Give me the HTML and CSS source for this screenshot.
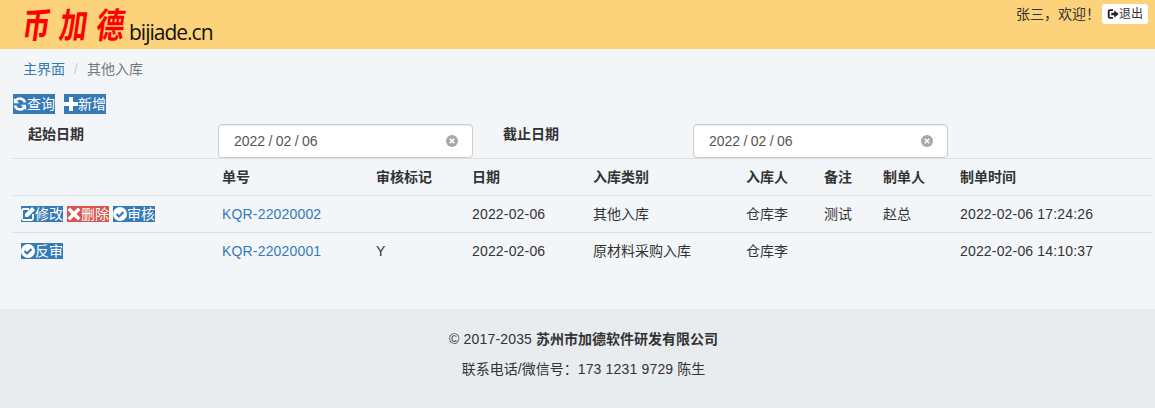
FILE: index.html
```html
<!DOCTYPE html>
<html lang="zh-CN">
<head>
<meta charset="utf-8">
<title>其他入库</title>
<link rel="stylesheet" href="styles.css">
</head>
<body>
<header class="topbar">
  <div class="logo"><span class="logo-cn">币加德</span><span class="logo-en">bijiade.cn</span></div>
  <div class="user">
    <span>张三，欢迎！</span>
    <a class="logout"><svg class="ico-out" viewBox="0 0 14 14"><path d="M7 2.500H3.500A1.500 1.500 0 0 0 2 4v6a1.500 1.500 0 0 0 1.500 1.500H7" fill="none" stroke="#222" stroke-width="2.200"/><path d="M5 5.500h3.500V2.500L13.500 7l-5 4.500V8.500H5z" fill="#222"/></svg>退出</a>
  </div>
</header>
<nav class="crumbs"><a>主界面</a><span class="sep">/</span><span class="cur">其他入库</span></nav>
<div class="tools">
  <a class="btn"><svg class="ico" viewBox="0 0 14 14"><path d="M12 5.500A5.200 5.200 0 0 0 3 3.300" fill="none" stroke="#fff" stroke-width="2.600"/><path d="M.8.800v5.500h5.500z" fill="#fff"/><path d="M2 8.500A5.200 5.200 0 0 0 11 10.700" fill="none" stroke="#fff" stroke-width="2.600"/><path d="M13.200 13.200V7.700H7.700z" fill="#fff"/></svg>查询</a>
  <a class="btn"><svg class="ico" viewBox="0 0 14 14"><path d="M5 0h4v5h5v4H9v5H5V9H0V5h5z" fill="#fff"/></svg>新增</a>
</div>
<form class="filters">
  <label class="f-label">起始日期</label>
  <div class="date"><span>2022 / 02 / 06</span><svg class="clear" viewBox="0 0 12 12"><circle cx="6" cy="6" r="6" fill="#a8a8a8"/><path d="M3.800 3.800l4.400 4.400M8.200 3.800L3.800 8.200" stroke="#fff" stroke-width="1.600"/></svg></div>
  <label class="f-label f-label-end">截止日期</label>
  <div class="date"><span>2022 / 02 / 06</span><svg class="clear" viewBox="0 0 12 12"><circle cx="6" cy="6" r="6" fill="#a8a8a8"/><path d="M3.800 3.800l4.400 4.400M8.200 3.800L3.800 8.200" stroke="#fff" stroke-width="1.600"/></svg></div>
</form>
<table class="grid">
  <colgroup>
    <col class="c1"><col class="c2"><col class="c3"><col class="c4"><col class="c5"><col class="c6"><col class="c7"><col class="c8"><col class="c9">
  </colgroup>
  <thead>
    <tr><th></th><th>单号</th><th>审核标记</th><th>日期</th><th>入库类别</th><th>入库人</th><th>备注</th><th>制单人</th><th>制单时间</th></tr>
  </thead>
  <tbody>
    <tr>
      <td>
        <div class="ops">
          <a class="btn small"><svg class="ico" viewBox="0 0 14 14"><path d="M8 2H2.500A1.500 1.500 0 0 0 1 3.500v8A1.500 1.500 0 0 0 2.500 13h8a1.500 1.500 0 0 0 1.500-1.500V7" fill="none" stroke="#fff" stroke-width="1.800"/><path d="M11 0l3 3-7 7H4V7z" fill="#fff"/></svg>修改</a>
          <a class="btn small red"><svg class="ico" viewBox="0 0 14 14"><path d="M3 .5L7 4.500 11 .5 13.500 3 9.500 7l4 4-2.500 2.500-4-4-4 4L.5 11l4-4-4-4z" fill="#fff"/></svg>删除</a>
          <a class="btn small"><svg class="ico" viewBox="0 0 14 14"><circle cx="7" cy="7" r="7" fill="#fff"/><path d="M3.500 7l2.500 2.500 4.500-4.500" fill="none" stroke="#337ab7" stroke-width="2.200"/></svg>审核</a>
        </div>
      </td>
      <td class="num"><a class="link">KQR-22020002</a></td><td></td><td class="num">2022-02-06</td><td>其他入库</td><td>仓库李</td><td>测试</td><td>赵总</td><td class="num">2022-02-06 17:24:26</td>
    </tr>
    <tr>
      <td>
        <div class="ops">
          <a class="btn small"><svg class="ico" viewBox="0 0 14 14"><circle cx="7" cy="7" r="7" fill="#fff"/><path d="M3.500 7l2.500 2.500 4.500-4.500" fill="none" stroke="#337ab7" stroke-width="2.200"/></svg>反审</a>
        </div>
      </td>
      <td class="num"><a class="link">KQR-22020001</a></td><td>Y</td><td class="num">2022-02-06</td><td>原材料采购入库</td><td>仓库李</td><td></td><td></td><td class="num">2022-02-06 14:10:37</td>
    </tr>
  </tbody>
</table>
<footer class="foot">
  <p><span class="num">© 2017-2035</span> <strong>苏州市加德软件研发有限公司</strong></p>
  <p>联系电话/微信号：<span class="num">173 1231 9729</span> 陈生</p>
</footer>
</body>
</html>
```
FILE: styles.css
```css
* { box-sizing: border-box; }
html, body { margin: 0; padding: 0; }
body {
  height: 408px;
  overflow: hidden;
  background: #f3f6f9;
  color: #333;
  font: 14px/20px "Liberation Sans", "Noto Sans CJK SC", sans-serif;
}
a { text-decoration: none; }
.num { letter-spacing: .17px; }

.topbar {
  height: 49px;
  background: #fcd27a;
  display: flex;
  justify-content: space-between;
  align-items: flex-start;
  padding: 0 7px 0 23px;
}
.logo { display: flex; align-items: flex-end; height: 49px; }
.logo-cn {
  align-self: flex-start;
  margin: 6px -5px 0 0;
  font: 700 28px/34px "Noto Sans CJK SC", sans-serif;
  color: #f00;
  letter-spacing: 9px;
  transform: skewX(-8deg) scaleY(1.25);
  white-space: nowrap;
}
.logo-en {
  font: 21px/26px "Open Sans", "Liberation Sans", sans-serif;
  color: #111;
  letter-spacing: -1px;
  margin-bottom: 4px;
}
.user { display: flex; align-items: center; gap: 2px; padding-top: 4px; }
.logout {
  display: flex;
  align-items: center;
  width: 46px;
  height: 20px;
  padding-left: 5px;
  background: #fff;
  border-radius: 3px;
  font-size: 12px;
  color: #333;
}
.ico-out { width: 12px; height: 12px; }

.crumbs { height: 39px; padding: 10px 23px 0; color: #777; }
.crumbs a { color: #337ab7; }
.sep { color: #ccc; margin: 0 9px; }

.tools { display: flex; gap: 9px; height: 36px; padding: 6px 13px 0; align-items: flex-start; }
.btn {
  display: inline-flex;
  align-items: center;
  height: 20px;
  background: #337ab7;
  color: #fff;
  line-height: 16px;
  white-space: nowrap;
}
.btn.small { height: 16px; }
.btn.red { background: #d9534f; }
.ico { width: 14px; height: 14px; flex: none; }

.filters {
  display: grid;
  grid-template-columns: 205px 255px 220px 255px;
  height: 34px;
  margin-left: 13px;
}
.f-label { padding-left: 15px; font-weight: 700; line-height: 20px; }
.f-label-end { padding-left: 30px; }
.date {
  display: flex;
  justify-content: space-between;
  align-items: center;
  height: 34px;
  padding: 0 14px 0 15px;
  background: #fff;
  border: 1px solid #ccc;
  border-radius: 4px;
  box-shadow: inset 0 1px 1px rgba(0,0,0,.075);
  color: #555;
  word-spacing: -.5px;
}
.clear { width: 12px; height: 12px; }

.grid { width: 1139px; margin-left: 13px; border-collapse: collapse; table-layout: fixed; }
.c1 { width: 201px; }
.c2 { width: 154px; }
.c3 { width: 96px; }
.c4 { width: 121px; }
.c5 { width: 153px; }
.c6 { width: 78px; }
.c7 { width: 59px; }
.c8 { width: 77px; }
.grid th, .grid td {
  height: 37px;
  padding: 8px;
  text-align: left;
  vertical-align: top;
  white-space: nowrap;
}
.grid th { border-top: 1px solid #ddd; border-bottom: 1px solid #ddd; }
.grid tbody tr + tr td { border-top: 1px solid #ddd; }
.ops { display: flex; align-items: center; gap: 4px; height: 20px; }
.link { color: #337ab7; }

.foot {
  height: 99px;
  margin-top: 39px;
  padding: 20px 0 0 12px;
  background: #e9ecef;
  text-align: center;
}
.foot p { margin: 0 0 10px; }
```
